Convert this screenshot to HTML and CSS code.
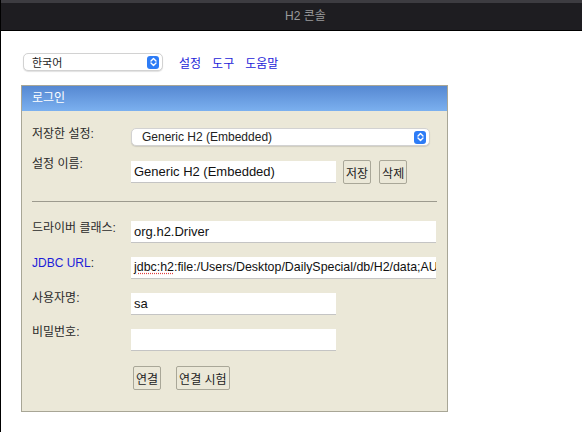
FILE: index.html
```html
<!DOCTYPE html>
<html lang="ko">
<head>
<meta charset="utf-8">
<title>H2 콘솔</title>
<link rel="stylesheet" href="styles.css">
</head>
<body>
<div class="window">
  <div class="titlebar"><span class="title">H2 콘솔</span></div>
  <div class="page">
    <div class="toolbar">
      <div class="select lang">
        <span class="select-text">한국어</span>
        <span class="select-btn"><svg width="7" height="10" viewBox="0 0 7 10"><path d="M1 4 L3.5 1.5 L6 4 M1 6 L3.5 8.5 L6 6" fill="none" stroke="#fff" stroke-width="1.4" stroke-linecap="round" stroke-linejoin="round"/></svg></span>
      </div>
      <a class="link" href="#">설정</a>
      <a class="link" href="#">도구</a>
      <a class="link" href="#">도움말</a>
    </div>
    <div class="panel">
      <div class="panel-head">로그인</div>
      <div class="panel-body">
        <div class="row r1">
          <div class="label">저장한 설정:</div>
          <div class="select wide">
            <span class="select-text">Generic H2 (Embedded)</span>
            <span class="select-btn"><svg width="7" height="10" viewBox="0 0 7 10"><path d="M1 4 L3.5 1.5 L6 4 M1 6 L3.5 8.5 L6 6" fill="none" stroke="#fff" stroke-width="1.4" stroke-linecap="round" stroke-linejoin="round"/></svg></span>
          </div>
        </div>
        <div class="row r2">
          <div class="label">설정 이름:</div>
          <div class="input short">Generic H2 (Embedded)</div>
          <button class="btn save">저장</button>
          <button class="btn del">삭제</button>
        </div>
        <div class="rule"></div>
        <div class="row r3">
          <div class="label">드라이버 클래스:</div>
          <div class="input long">org.h2.Driver</div>
        </div>
        <div class="row r4">
          <div class="label"><a class="jdbc" href="#">JDBC URL</a>:</div>
          <div class="input long url"><span class="spell">jdbc:h2</span>:file:/Users/Desktop/DailySpecial/db/H2/data;AUTO_SERVER=TRUE</div>
        </div>
        <div class="row r5">
          <div class="label">사용자명:</div>
          <div class="input short">sa</div>
        </div>
        <div class="row r6">
          <div class="label">비밀번호:</div>
          <div class="input short"></div>
        </div>
        <div class="row r7">
          <div class="label"></div>
          <button class="btn connect">연결</button>
          <button class="btn test">연결 시험</button>
        </div>
      </div>
    </div>
  </div>
</div>
</body>
</html>
```
FILE: styles.css
```css
* { box-sizing: border-box; }
html, body { margin: 0; padding: 0; background: #fff; }
body {
  font-family: "Liberation Sans", "Noto Sans CJK KR", sans-serif;
  font-size: 12px;
  color: #000;
}
.window {
  border-left: 1px solid #000;
  height: 432px;
}
.titlebar {
  height: 31px;
  background: #1e1d21;
  border-top: 3px solid #3d3c41;
  border-bottom: 1px solid #000;
  text-align: center;
  padding-top: 6px;
  padding-left: 28px;
}
.title {
  color: #9b9b9d;
  font-size: 12px;
  line-height: 15px;
}
.page {
  padding: 22px 0 0 20px;
}
.toolbar {
  display: flex;
  align-items: center;
  height: 18px;
}
.select {
  display: flex;
  align-items: center;
  justify-content: space-between;
  background: #fff;
  border: 1px solid #d2d2d2;
  border-radius: 5px;
  box-shadow: 0 1px 1px rgba(0,0,0,0.12);
  height: 18px;
  padding: 0 3px 0 8px;
  font-size: 11px;
  color: #222;
}
.lang { width: 140px; margin-left: 2px; }
.select-btn {
  width: 12px;
  height: 13px;
  border-radius: 3px;
  background: #2d7cf6;
  display: flex;
  align-items: center;
  justify-content: center;
}
.link {
  color: #1c1cd8;
  text-decoration: none;
  font-size: 12px;
  margin-left: 16px;
  white-space: nowrap;
}
.link + .link { margin-left: 11px; }
.panel {
  margin-top: 14px;
  width: 427px;
  height: 327px;
  border: 1px solid #a8a696;
  background: #ebe8d8;
}
.panel-head {
  height: 25px;
  background: linear-gradient(#5688d2, #7bb0ef);
  color: #fff;
  font-size: 12px;
  line-height: 24px;
  padding-left: 10px;
}
.panel-body {
  padding: 17px 10px 0 10px;
}
.row {
  display: flex;
  align-items: flex-start;
}
.label {
  width: 99px;
  flex: none;
  font-size: 12px;
  line-height: 14px;
  color: #2a2a2a;
  white-space: nowrap;
}
.r1 .label { margin-top: -1px; }
.wide { width: 299px; font-size: 12px; padding-left: 10px; }
.r2 { margin-top: 14px; }
.r2 .label { margin-top: -3px; }
.input {
  background: #fff;
  border-bottom: 1px solid #c4c4c4;
  height: 22px;
  line-height: 21px;
  padding-left: 3px;
  font-size: 13px;
  color: #111;
  white-space: nowrap;
  overflow: hidden;
  flex: none;
}
.url { font-size: 12.4px; }
.r2 .input { margin-top: 1px; }
.short { width: 205px; }
.long { width: 305px; }
.btn {
  font-family: "Liberation Sans", "Noto Sans CJK KR", sans-serif;
  font-size: 12px;
  background: #ebe8d8;
  border: 1px solid #a9a798;
  border-radius: 2px;
  height: 24px;
  padding: 0 2px;
  color: #222;
  margin: 0;
  white-space: nowrap;
  flex: none;
}
.save { margin-left: 7px; }
.del { margin-left: 8px; }
.rule {
  height: 1px;
  background: #9c9a8e;
  margin: 17px 0 19px 0;
  width: 405px;
}
.r3 .label { margin-top: 0; }
.r4 { margin-top: 14px; }
.r4 .label { margin-top: -1px; }
.r5 { margin-top: 14px; }
.r5 .label { margin-top: -2px; }
.r6 { margin-top: 14px; }
.r6 .label { margin-top: -4px; }
.r7 { margin-top: 15px; }
.connect { margin-left: 2px; }
.test { margin-left: 15px; }
.jdbc { color: #1c1cd8; text-decoration: none; }
.spell {
  text-decoration: underline dotted #e04040;
  text-underline-offset: 2px;
}
```
